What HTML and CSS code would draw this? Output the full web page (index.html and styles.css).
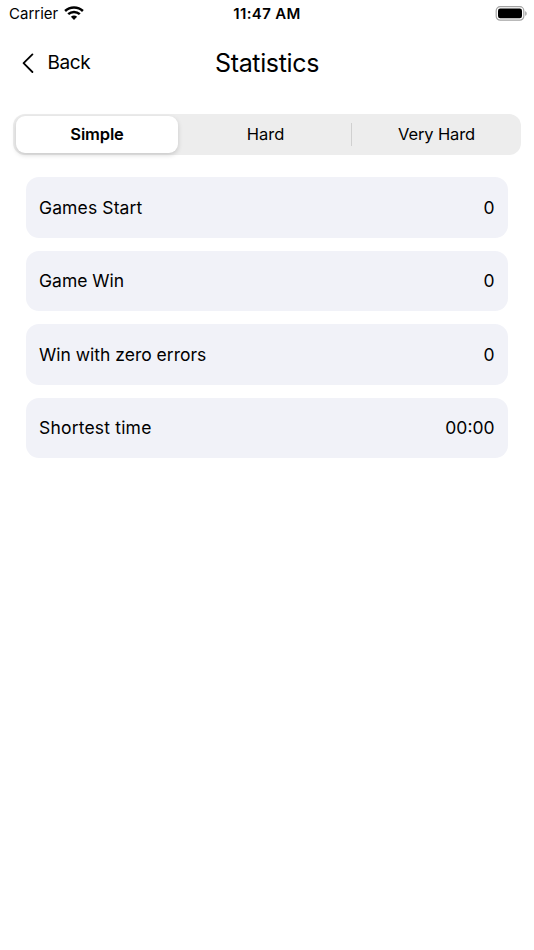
FILE: index.html
```html
<!DOCTYPE html>
<html lang="en">
<head>
<meta charset="utf-8">
<title>Statistics</title>
<link rel="stylesheet" href="styles.css">
</head>
<body>
<header class="status">
  <div class="carrier"><span class="carrier-name">Carrier</span>
    <svg class="wifi" viewBox="0 0 20 14" width="20" height="14"><g fill="none" stroke="#000" stroke-width="2.5"><path d="M1.1 5C6 .3 14 .3 18.9 5"/><path d="M4.2 8.2c3.4-3.1 8.2-3.1 11.6 0"/></g><path d="M10 13.9l-3.1-3.1c1.8-1.6 4.4-1.6 6.2 0z"/></svg>
  </div>
  <span class="clock">11:47 AM</span>
  <svg class="battery" viewBox="0 0 32 15" width="32" height="15"><rect x="1.2" y=".7" width="27.6" height="13.5" rx="4" fill="none" stroke="#a3a3a3" stroke-width="1.2"/><rect x="3" y="2.5" width="24" height="9.8" rx="2.2"/><path d="M30.2 5.2c2 .7 2 3.9 0 4.6z" fill="#a3a3a3"/></svg>
</header>
<nav class="nav">
  <div class="back"><svg viewBox="0 0 12 20" width="12" height="20"><path d="M10.4 1.4L1.6 10.2l8.8 8.8" fill="none" stroke="#000" stroke-width="1.8" stroke-linecap="round" stroke-linejoin="round"/></svg><span class="back-text">Back</span></div>
  <h1 class="title">Statistics</h1>
</nav>
<div class="tabs">
  <div class="tab active"><span class="tab-text">Simple</span></div>
  <div class="tab"><span class="tab-text">Hard</span></div>
  <div class="divider"></div>
  <div class="tab"><span class="tab-text very">Very Hard</span></div>
</div>
<main class="list">
  <div class="row"><span class="wide">Games Start</span><span>0</span></div>
  <div class="row"><span>Game Win</span><span>0</span></div>
  <div class="row"><span>Win with zero errors</span><span>0</span></div>
  <div class="row"><span class="wider">Shortest time</span><span>00:00</span></div>
</main>
</body>
</html>
```
FILE: styles.css
```css
* { box-sizing: border-box; }
body { margin: 0; background: #fff; color: #000; font-family: Inter, "Liberation Sans", sans-serif; height: 950px; overflow: hidden; }
svg { display: block; flex: none; }
.status { display: grid; grid-template-columns: 1fr auto 1fr; align-items: center; height: 27px; padding: 0 7px 0 9px; font-size: 15px; }
.carrier { display: flex; align-items: center; gap: 6px; }
.wifi { margin-bottom: 1px; }
.clock { font-weight: 600; letter-spacing: .35px; margin: 0 1px 0 -1px; }
.battery { justify-self: end; margin-bottom: 1px; }
.nav { display: grid; grid-template-columns: 1fr auto 1fr; align-items: center; height: 71px; padding: 0 21.5px; }
.back { display: flex; align-items: center; gap: 14px; font-size: 19px; letter-spacing: -.4px; }
.title { margin: 0; font-size: 25px; font-weight: 400; letter-spacing: -.35px; }
.tabs { display: grid; grid-template-columns: 162px 173px 1px 1fr; height: 41px; margin: 16px 13px 0; padding: 2px 2px 2px 3px; border-radius: 12px; background: #ededed; font-size: 16.5px; }
.tab { display: flex; align-items: center; justify-content: center; padding: 0 0 1px 2px; }
.active { background: #fff; border-radius: 9px; padding-left: 0; font-weight: 600; letter-spacing: -.15px; box-shadow: 0 2px 5px rgba(0, 0, 0, .16); }
.very { letter-spacing: -.15px; }
.divider { height: 23px; align-self: center; background: #d0d0d0; }
.list { display: grid; gap: 13px; margin: 22px 26px 0; }
.row { display: flex; align-items: center; justify-content: space-between; height: 60.5px; padding: 0 13.5px 0 13px; border-radius: 13px; background: #f1f2f8; font-size: 17.5px; }
.wide { letter-spacing: .12px; }
.wider { letter-spacing: .19px; }
```
